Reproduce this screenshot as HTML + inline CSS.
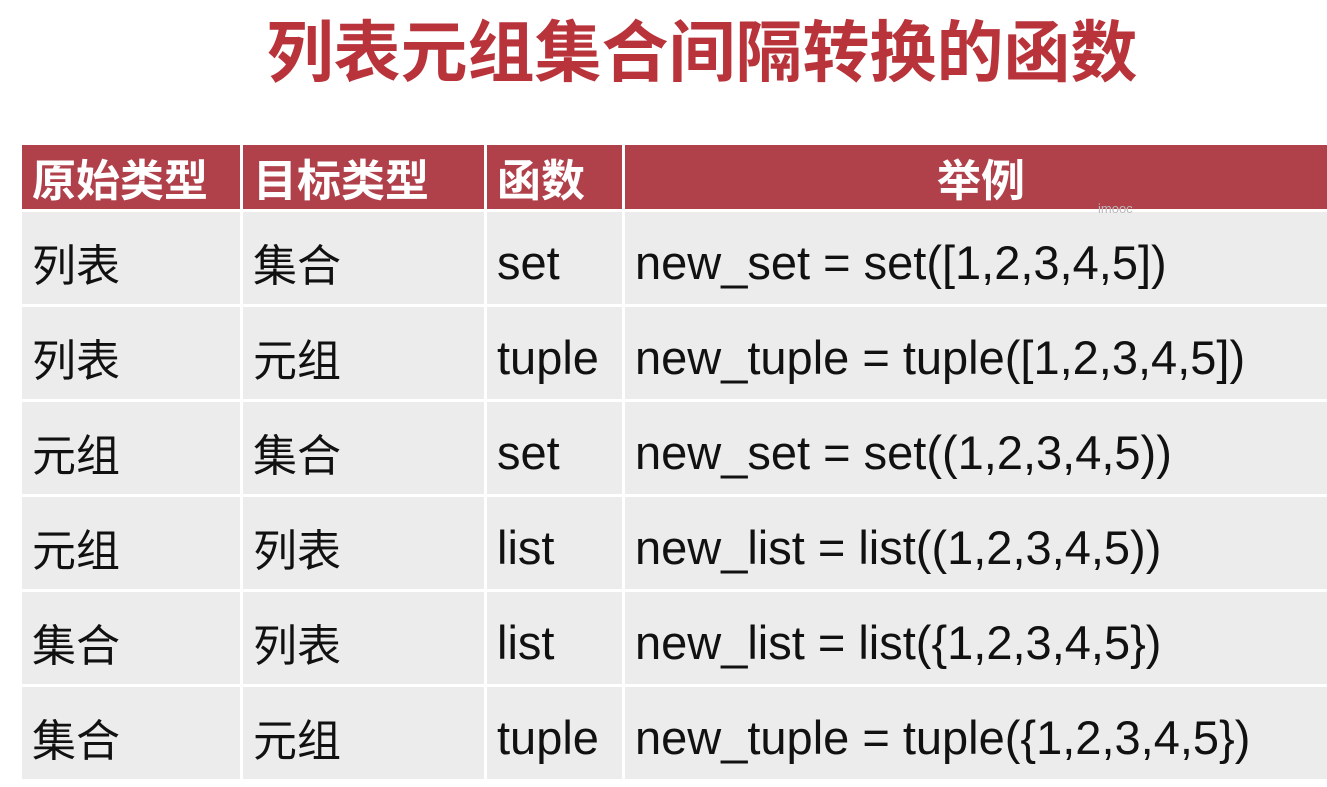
<!DOCTYPE html>
<html><head><meta charset="utf-8"><style>
body{margin:0;width:1327px;height:787px;background:#fff;overflow:hidden;font-family:"Liberation Sans","Noto Sans CJK SC",sans-serif;position:relative}
.title{position:absolute;left:0;width:1404px;top:9px;text-align:center;color:#b8333a;font-size:67px;font-weight:bold;line-height:90px}
table{position:absolute;left:19px;top:145px;border-collapse:collapse;table-layout:fixed;width:1311px}
td,th{border:3px solid #fff;padding:8px 0 0 10px;text-align:left;font-size:47px;color:#111;background:#ececec;white-space:nowrap;overflow:hidden}
td.z{font-size:44px}
tr.r{height:95px}
th{background:#b0414b;color:#fff;font-size:44px;font-weight:bold;border-top:0;padding-top:0}
tr.h{height:62px}
th.c{text-align:center}
.wm{position:absolute;left:1098px;top:201px;font-size:13px;color:#bbb}
</style></head><body>
<div class="title">列表元组集合间隔转换的函数</div>
<table>
<colgroup><col style="width:221px"><col style="width:244px"><col style="width:138px"><col></colgroup>
<tr class="h"><th>原始类型</th><th>目标类型</th><th>函数</th><th class="c">举例</th></tr>
<tr class="r"><td class="z">列表</td><td class="z">集合</td><td>set</td><td>new_set = set([1,2,3,4,5])</td></tr>
<tr class="r"><td class="z">列表</td><td class="z">元组</td><td>tuple</td><td>new_tuple = tuple([1,2,3,4,5])</td></tr>
<tr class="r"><td class="z">元组</td><td class="z">集合</td><td>set</td><td>new_set = set((1,2,3,4,5))</td></tr>
<tr class="r"><td class="z">元组</td><td class="z">列表</td><td>list</td><td>new_list = list((1,2,3,4,5))</td></tr>
<tr class="r"><td class="z">集合</td><td class="z">列表</td><td>list</td><td>new_list = list({1,2,3,4,5})</td></tr>
<tr class="r"><td class="z">集合</td><td class="z">元组</td><td>tuple</td><td>new_tuple = tuple({1,2,3,4,5})</td></tr>
</table>
<div class="wm">imooc</div>
</body></html>
